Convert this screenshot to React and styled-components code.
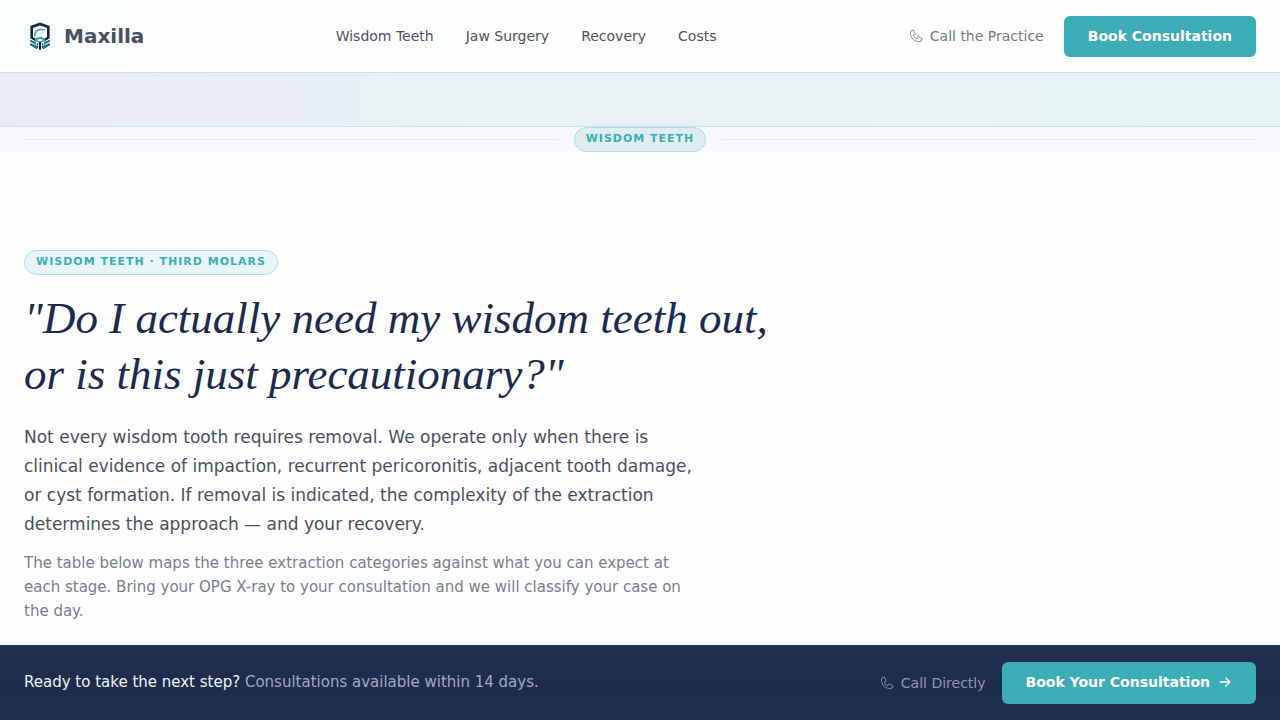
import React from 'react';
import styled, { createGlobalStyle, css } from 'styled-components';
import { PiArrowRightBold, PiPhoneLight } from 'react-icons/pi';

const GlobalStyle = createGlobalStyle`
  * {
    box-sizing: border-box;
  }

  body {
    margin: 0;
    background: #fefefe;
    color: #4a5062;
    font-family: 'DejaVu Sans', sans-serif;
  }
`;

const Page = styled.div`
  display: flex;
  flex-direction: column;
  min-height: 100vh;
`;

const Header = styled.header`
  display: flex;
  align-items: center;
  justify-content: space-between;
  padding: 16px 24px 15px;
  background: linear-gradient(90deg, #fafefe, #fefefe 24%);
  border-bottom: 1px solid #cfdfe4;
`;

const Brand = styled.a`
  display: flex;
  align-items: center;
  gap: 8px;
  padding-bottom: 2px;
  color: #4a5062;
  font-size: 20px;
  font-weight: bold;
  text-decoration: none;
`;

const Nav = styled.nav`
  display: flex;
  gap: 32px;
  padding-bottom: 2px;
`;

const NavLink = styled.a`
  color: #4d5361;
  font-size: 14px;
  line-height: 20px;
  text-decoration: none;
`;

const Actions = styled.div`
  display: flex;
  align-items: center;
  gap: ${({ $gap }) => $gap}px;
`;

const PhoneLink = styled.a`
  display: flex;
  align-items: center;
  gap: 6px;
  padding-bottom: ${({ $light }) => ($light ? 0 : 2)}px;
  color: ${({ $light }) => ($light ? '#8e98ad' : '#747b8a')};
  font-size: 14px;
  line-height: 20px;
  text-decoration: none;
`;

const BookButton = styled.button`
  display: flex;
  align-items: center;
  gap: 8px;
  height: ${({ $tall }) => ($tall ? 42 : 41)}px;
  padding: 0 24px 2px;
  border: 0;
  border-radius: 6px;
  background: #3aadb8;
  color: #fff;
  font-family: inherit;
  font-size: 14px;
  font-weight: bold;
`;

const Band = styled.div`
  height: 54px;
  background: linear-gradient(90deg, #e8ecf5, #e9f2f5 40%, #e5f3f3);
  border-bottom: 1px solid #cbe2e7;
`;

const DividerRow = styled.div`
  display: flex;
  align-items: center;
  gap: 16px;
  padding: 0 24px;
  background: #f7f9fc;
`;

const Rule = styled.hr`
  flex: 1;
  height: 1px;
  margin: 0;
  border: 0;
  background: #e3eaf0;
`;

const pill = css`
  padding: 4px 11px 6px;
  border: 1px solid #abdde1;
  border-radius: 13px;
  color: #3aadb8;
  font-size: 11px;
  font-weight: bold;
  letter-spacing: 1px;
  line-height: 13px;
  text-transform: uppercase;
`;

const DividerLabel = styled.span`
  ${pill}
  background: #deedf1;
`;

const Eyebrow = styled.span`
  ${pill}
  background: #e7f5f7;
`;

const Section = styled.main`
  display: flex;
  flex: 1;
  flex-direction: column;
  align-items: flex-start;
  padding: 98px 24px 20px;
`;

const Title = styled.h1`
  max-width: 760px;
  margin: 15px 0 21px;
  color: #1b2a4e;
  font-family: 'Liberation Serif', serif;
  font-size: 45px;
  font-style: italic;
  font-weight: normal;
  line-height: 56px;
`;

const Lead = styled.p`
  max-width: 680px;
  margin: 0 0 12px;
  color: #4a5062;
  font-size: 17px;
  line-height: 29px;
`;

const Note = styled.p`
  max-width: 680px;
  margin: 0;
  color: #757e8f;
  font-size: 15px;
  line-height: 24px;
`;

const BottomBar = styled.footer`
  position: sticky;
  bottom: 0;
  display: flex;
  align-items: center;
  justify-content: space-between;
  padding: 16px 24px;
  border-top: 1px solid #28405a;
  background: linear-gradient(#22304f, #1d2c4d 50%, #1f2e4e);
`;

const Prompt = styled.p`
  margin: 0;
  padding-bottom: 2px;
  color: #a0abc0;
  font-size: 15px;
  line-height: 20px;
`;

const Question = styled.span`
  color: #eef5fa;
`;

const Logo = () => (
  <svg width="32" height="32" viewBox="0 0 32 32" fill="none" aria-hidden="true">
    <path d="M11.500 20 7.700 17.500V7L16 4l8.300 3v10.500L20.500 20" stroke="#182746" strokeWidth="2.600" />
    <path d="M10.800 16.500C10.800 11 14 8.200 21 9.800" stroke="#4fb0b4" strokeWidth="1.800" />
    <path d="M13 16.500c.5-3 3-4.500 7-4.300" stroke="#bfe1e3" strokeWidth="1" />
    <path d="m6.300 20.500 4.700 2.800M25.700 20.500 21 23.300" stroke="#205968" strokeWidth="1.800" />
    <path d="m6.300 24 7.200 4.200M25.700 24l-7.200 4.200" stroke="#1f6673" strokeWidth="2.200" />
    <path d="M12 25.500c-2-4-.5-7.500 4-7.500s6 3.500 4 7.500" stroke="#3d9fa5" strokeWidth="1.800" />
    <path d="m12.500 20.500 3.500 2 3.500-2M13.500 23v4M18.500 23v4" stroke="#257c86" strokeWidth="1.300" />
    <path d="M16 22v7.700" stroke="#132643" strokeWidth="2" />
  </svg>
);

const links = ['Wisdom Teeth', 'Jaw Surgery', 'Recovery', 'Costs'];

export default function App() {
  return (
    <Page>
      <GlobalStyle />
      <Header>
        <Brand href="#">
          <Logo />
          Maxilla
        </Brand>
        <Nav>
          {links.map(link => (
            <NavLink key={link} href="#">{link}</NavLink>
          ))}
        </Nav>
        <Actions $gap={20}>
          <PhoneLink href="tel:">
            <PiPhoneLight size={16} />
            Call the Practice
          </PhoneLink>
          <BookButton>Book Consultation</BookButton>
        </Actions>
      </Header>
      <Band />
      <DividerRow>
        <Rule />
        <DividerLabel>Wisdom Teeth</DividerLabel>
        <Rule />
      </DividerRow>
      <Section>
        <Eyebrow>Wisdom Teeth · Third Molars</Eyebrow>
        <Title>"Do I actually need my wisdom teeth out, or is this just precautionary?"</Title>
        <Lead>
          Not every wisdom tooth requires removal. We operate only when there is clinical
          evidence of impaction, recurrent pericoronitis, adjacent tooth damage, or cyst
          formation. If removal is indicated, the complexity of the extraction determines
          the approach — and your recovery.
        </Lead>
        <Note>
          The table below maps the three extraction categories against what you can expect
          at each stage. Bring your OPG X-ray to your consultation and we will classify
          your case on the day.
        </Note>
      </Section>
      <BottomBar>
        <Prompt>
          <Question>Ready to take the next step?</Question> Consultations available within 14 days.
        </Prompt>
        <Actions $gap={16}>
          <PhoneLink href="tel:" $light>
            <PiPhoneLight size={16} />
            Call Directly
          </PhoneLink>
          <BookButton $tall>
            Book Your Consultation
            <PiArrowRightBold size={14} />
          </BookButton>
        </Actions>
      </BottomBar>
    </Page>
  );
}
